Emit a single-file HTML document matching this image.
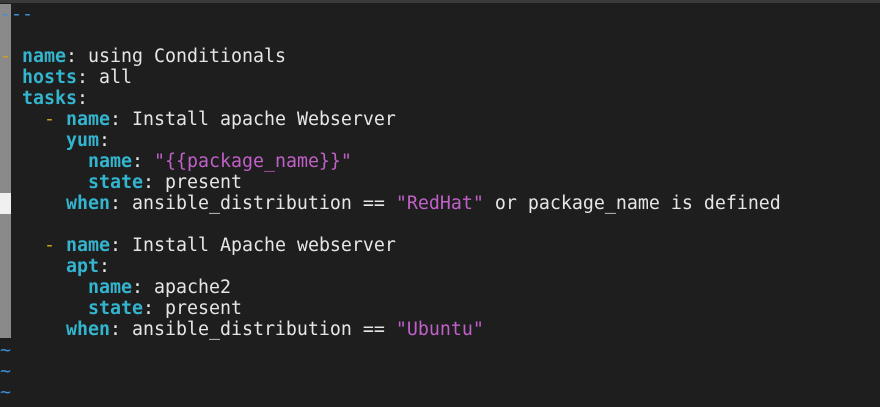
<!DOCTYPE html>
<html><head><style>
html,body{margin:0;padding:0;background:#1e1e1e;width:880px;height:407px;overflow:hidden}
#top{position:absolute;left:0;top:0;width:880px;height:3px;background:#3a3a3a}
#bar{position:absolute;left:0;top:4px;width:11px;height:334px;background:#8a8a8a}
#wb{position:absolute;left:0;top:193px;width:11px;height:21px;background:#f0f0f0}
pre{position:absolute;left:0;top:4px;margin:0;font-family:"DejaVu Sans Mono","Liberation Mono",monospace;font-size:18.27px;line-height:21px;color:#e6e6e6}
.k{color:#33b5cf;font-weight:bold}
.s{color:#c060c8}
.d{color:#d0a020}
.b{color:#3a8fd8}
</style></head><body>
<div id="top"></div><div id="bar"></div><div id="wb"></div>
<pre><span class="b">---</span>

<span class="d">-</span> <span class="k">name</span>: using Conditionals
  <span class="k">hosts</span>: all
  <span class="k">tasks</span>:
    <span class="d">-</span> <span class="k">name</span>: Install apache Webserver
      <span class="k">yum</span>:
        <span class="k">name</span>: <span class="s">"{{package_name}}"</span>
        <span class="k">state</span>: present
      <span class="k">when</span>: ansible_distribution == <span class="s">"RedHat"</span> or package_name is defined

    <span class="d">-</span> <span class="k">name</span>: Install Apache webserver
      <span class="k">apt</span>:
        <span class="k">name</span>: apache2
        <span class="k">state</span>: present
      <span class="k">when</span>: ansible_distribution == <span class="s">"Ubuntu"</span>
<span class="b">~</span>
<span class="b">~</span>
<span class="b">~</span></pre>
</body></html>
